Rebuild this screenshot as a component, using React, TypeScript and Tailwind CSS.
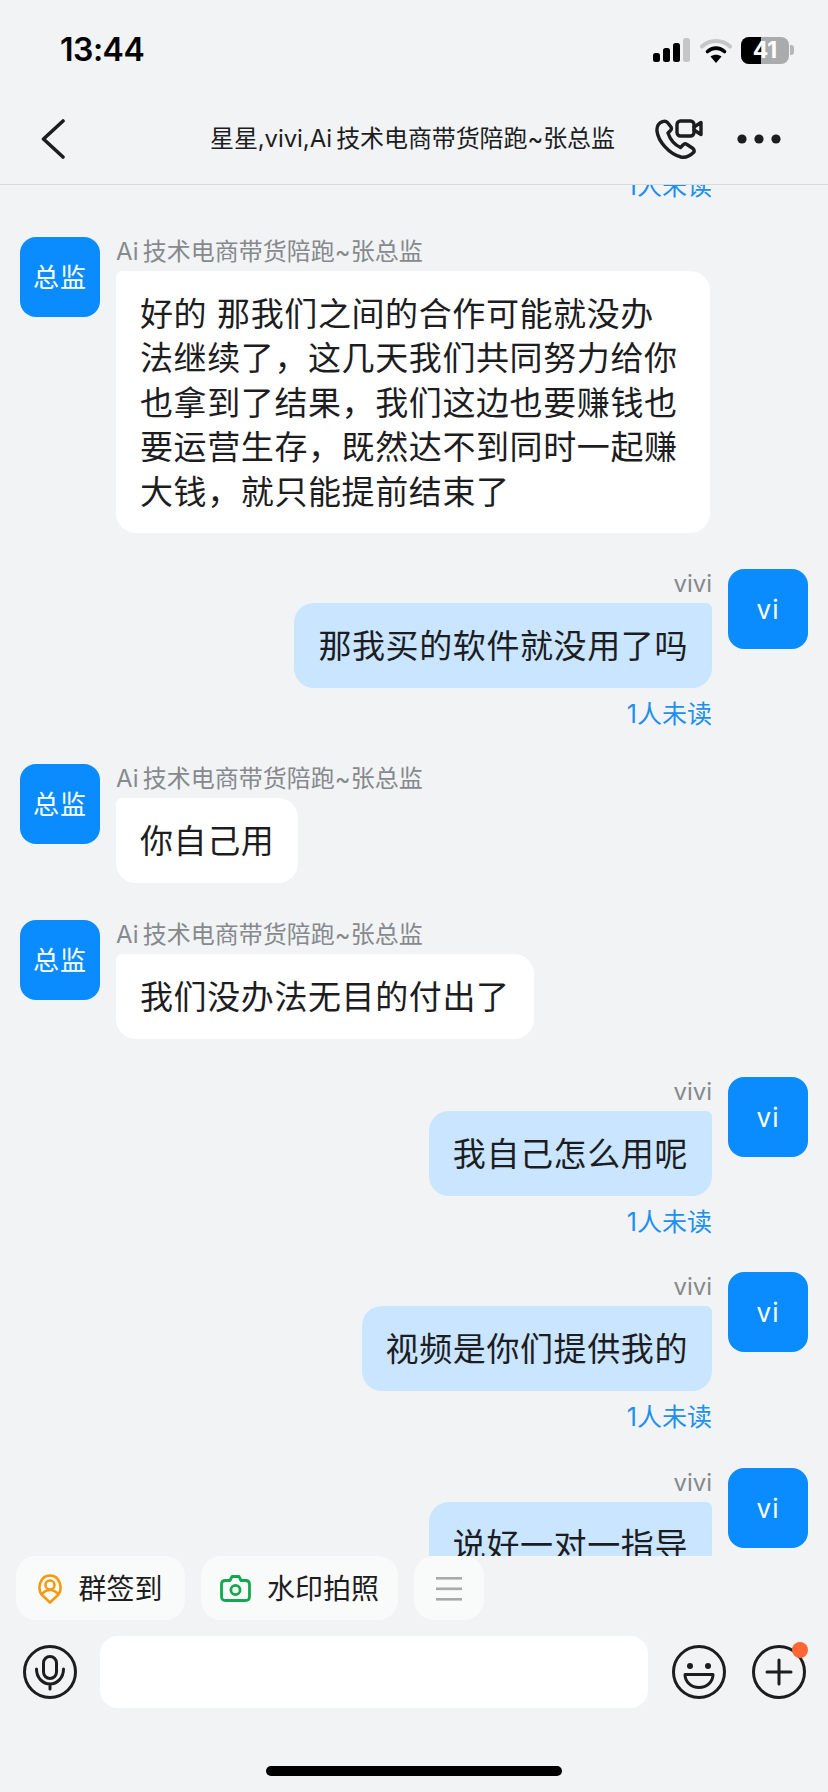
const font = '[font-family:Inter,"Noto_Sans_CJK_SC",sans-serif]';

function Avatar({ label }: { label: string }) {
  return (
    <div className="flex h-[80px] w-[80px] shrink-0 items-center justify-center rounded-[16px] bg-[#0a8cff] pt-[1px] text-[26px] tracking-[1px] text-white">
      {label}
    </div>
  );
}

function Incoming({ text, mt }: { text: string; mt: string }) {
  return (
    <div className={`flex gap-4 ${mt}`}>
      <Avatar label="总监" />
      <div className="flex min-w-0 flex-col items-start">
        <div className="flex h-[34px] items-center pb-[5px] text-[24px] text-[#86898d]">Ai{"\u2009"}技术电商带货陪跑~张总监</div>
        <div className="min-h-[85px] max-w-[594px] rounded-[20px] rounded-tl-[6px] bg-white px-6 pb-[19px] pt-[21px] text-[33px] leading-[44.4px] tracking-[0.6px] text-[#1d1d1f]">
          {text}
        </div>
      </div>
    </div>
  );
}

function Outgoing({ text, mt }: { text: string; mt: string }) {
  return (
    <div className={`flex justify-end gap-4 ${mt}`}>
      <div className="flex min-w-0 flex-col items-end">
        <div className="flex h-[34px] items-center pb-[5px] text-[24px] text-[#86898d]">vivi</div>
        <div className="min-h-[85px] rounded-[20px] rounded-tr-[6px] bg-[#c9e5ff] px-6 pb-[19px] pt-[21px] text-[33px] leading-[44.4px] tracking-[0.6px] text-[#1d1d1f]">
          {text}
        </div>
        <div className="flex h-[50px] items-center pt-[3px] text-[25px] text-[#2090ee]">1人未读</div>
      </div>
      <Avatar label="vi" />
    </div>
  );
}

function StatusIcons() {
  return (
    <div className="flex items-center gap-[9px]">
      <svg width="38" height="24" viewBox="0 0 38 24">
        <rect x="0" y="15" width="7" height="9" rx="2.5" fill="#000" />
        <rect x="10" y="10" width="7" height="14" rx="2.5" fill="#000" />
        <rect x="20" y="5" width="7" height="19" rx="2.5" fill="#000" />
        <rect x="30" y="0" width="7" height="24" rx="2.5" fill="#c4c6c8" />
      </svg>
      <svg width="32" height="26" viewBox="0 0 32 26" fill="none">
        <path d="M2 9.5C9.5 2 22.5 2 30 9.5" stroke="#c4c6c8" strokeWidth="4" strokeLinecap="round" />
        <path d="M7.5 14.5C12.5 10 19.5 10 24.5 14.5" stroke="#000" strokeWidth="3.6" strokeLinecap="round" />
        <path d="M16 26L10.5 19.5C13.5 17 18.5 17 21.5 19.5Z" fill="#000" />
      </svg>
      <div className="flex items-center gap-[1px]">
        <div className="relative flex h-[27px] w-[48px] items-center justify-center overflow-hidden rounded-[8px] bg-[#a9abad]">
          <div className="absolute inset-y-0 left-0 w-[20px] bg-black" />
          <span className="relative text-[23px] font-bold leading-none text-white">41</span>
        </div>
        <div className="h-[10px] w-[4px] rounded-r-[3px] bg-[#b5b7b9]" />
      </div>
    </div>
  );
}

function CallIcon() {
  return (
    <svg className="shrink-0" width="48" height="40" viewBox="0 0 48 40" fill="none" stroke="#1d1d1f" strokeWidth="3.4" strokeLinecap="round" strokeLinejoin="round">
      <path d="M8 2.5C4 3.5 1.5 7 2 12C3 22 14 35 26 38C31 39 35.5 36.5 39 33C39.5 31.5 39 30.5 38 29.5L32 25.5C30.5 24.5 29 24.8 28 26L25.5 28.5C20 26 15 20 13 14L15.5 11.5C16.5 10.5 16.5 9 16 8L12.5 3.5C11.5 2.5 9.5 2 8 2.5Z" />
      <rect x="22" y="2" width="17" height="15" rx="3.5" />
      <path d="M39 8L46 3.5V15.5L39 11" />
    </svg>
  );
}

function Chip({ children, w }: { children: React.ReactNode; w: string }) {
  return (
    <div className={`flex h-[64px] ${w} items-center justify-center gap-[16px] rounded-[20px] bg-[#f9fafa] pt-[1px] text-[28px] text-[#1d1d1f]`}>
      {children}
    </div>
  );
}

export default function App() {
  return (
    <div className={`flex h-[1792px] w-[828px] flex-col overflow-hidden bg-[#f1f3f5] ${font}`}>
      <div className="flex h-[100px] shrink-0 items-center justify-between pl-[60px] pr-[34px]">
        <span className="text-[32px] font-semibold leading-none tracking-[-0.5px] text-black">13:44</span>
        <StatusIcons />
      </div>
      <div className="flex h-[85px] shrink-0 items-center border-b border-[#d8dadc] pb-[6px]">
        <svg className="ml-[41px] shrink-0" width="24" height="40" viewBox="0 0 24 40" fill="none" stroke="#1d1d1f" strokeWidth="3.6" strokeLinecap="round" strokeLinejoin="round">
          <path d="M22 2L2.5 20L22 38" />
        </svg>
        <div className="ml-[145px] w-[408px] shrink-0 whitespace-nowrap text-[24px] tracking-[-0.1px] text-[#1d1d1f]">星星,vivi,Ai{"\u2009"}技术电商带货陪跑~张总监</div>
        <div className="ml-[37px] shrink-0"><CallIcon /></div>
        <svg className="ml-[34px] shrink-0" width="44" height="10" viewBox="0 0 44 10" fill="#1d1d1f">
          <circle cx="5" cy="5" r="4.6" />
          <circle cx="22" cy="5" r="4.6" />
          <circle cx="39" cy="5" r="4.6" />
        </svg>
      </div>
      <div className="h-[1371px] shrink-0 overflow-hidden px-5">
        <div className="-mt-[17px] flex h-[36px] justify-end pr-[96px] text-[25px] text-[#2090ee]">1人未读</div>
        <Incoming mt="mt-[33px]" text="好的 那我们之间的合作可能就没办法继续了，这几天我们共同努力给你也拿到了结果，我们这边也要赚钱也要运营生存，既然达不到同时一起赚大钱，就只能提前结束了" />
        <Outgoing mt="mt-[36px]" text="那我买的软件就没用了吗" />
        <Incoming mt="mt-[26px]" text="你自己用" />
        <Incoming mt="mt-[37px]" text="我们没办法无目的付出了" />
        <Outgoing mt="mt-[38px]" text="我自己怎么用呢" />
        <Outgoing mt="mt-[26px]" text="视频是你们提供我的" />
        <Outgoing mt="mt-[27px]" text="说好一对一指导" />
      </div>
      <div className="flex shrink-0 gap-4 pl-4">
        <Chip w="w-[169px]">
          <svg width="24" height="30" viewBox="0 0 24 30" fill="none" stroke="#f59a0c" strokeWidth="2.6" strokeLinejoin="round">
            <path d="M12 28.5L3.5 20.5C-0.5 15 1.5 1.5 12 1.5C22.5 1.5 24.5 15 20.5 20.5Z" />
            <circle cx="12" cy="11" r="4.5" />
            <path d="M3.5 20.5C6 17.5 9 16 12 16C15 16 18 17.5 20.5 20.5" />
          </svg>
          <span>群签到</span>
        </Chip>
        <Chip w="w-[197px]">
          <svg width="31" height="27" viewBox="0 0 31 27" fill="none" stroke="#12a84e" strokeWidth="2.8" strokeLinejoin="round">
            <path d="M10 5.5L12 1.5H19L21 5.5H25.5C28 5.5 29.5 7 29.5 9.5V21.5C29.5 24 28 25.5 25.5 25.5H5.5C3 25.5 1.5 24 1.5 21.5V9.5C1.5 7 3 5.5 5.5 5.5Z" />
            <circle cx="15.5" cy="15" r="4.6" />
          </svg>
          <span>水印拍照</span>
        </Chip>
        <Chip w="w-[70px]">
          <svg width="26" height="24" viewBox="0 0 26 24" fill="#a8a9aa">
            <rect x="0" y="0" width="26" height="2.6" />
            <rect x="0" y="10.5" width="26" height="2.6" />
            <rect x="0" y="21" width="26" height="2.6" />
          </svg>
        </Chip>
      </div>
      <div className="mt-4 flex shrink-0 items-center pl-[23px]">
        <svg width="54" height="54" viewBox="0 0 54 54" fill="none" stroke="#1d1d1f" strokeWidth="3" strokeLinecap="round">
          <circle cx="27" cy="27" r="25.5" />
          <rect x="20.5" y="11.5" width="13" height="22" rx="6.5" />
          <path d="M13.5 24C13.5 33 20 39 27 39C34 39 40.5 33 40.5 24M27 39V44" />
        </svg>
        <div className="ml-[23px] h-[72px] w-[548px] rounded-[18px] bg-white" />
        <svg className="ml-[24px]" width="54" height="54" viewBox="0 0 54 54" fill="none" stroke="#1d1d1f" strokeWidth="3" strokeLinejoin="round">
          <circle cx="27" cy="27" r="25.5" />
          <circle cx="18" cy="21" r="3" fill="#1d1d1f" stroke="none" />
          <circle cx="36" cy="21" r="3" fill="#1d1d1f" stroke="none" />
          <path d="M13 29.5H41C41 37 34.5 42.5 27 42.5C19.5 42.5 13 37 13 29.5Z" />
        </svg>
        <div className="relative ml-[26px] h-[54px] w-[54px]">
          <svg width="54" height="54" viewBox="0 0 54 54" fill="none" stroke="#1d1d1f" strokeWidth="3" strokeLinecap="round">
            <circle cx="27" cy="27" r="25.5" />
            <path d="M27 15V39M15 27H39" />
          </svg>
          <div className="absolute -right-[2px] -top-[3px] h-[16px] w-[16px] rounded-full bg-[#ff6633]" />
        </div>
      </div>
      <div className="mt-[58px] flex shrink-0 justify-center">
        <div className="h-[10px] w-[296px] rounded-full bg-black" />
      </div>
    </div>
  );
}
